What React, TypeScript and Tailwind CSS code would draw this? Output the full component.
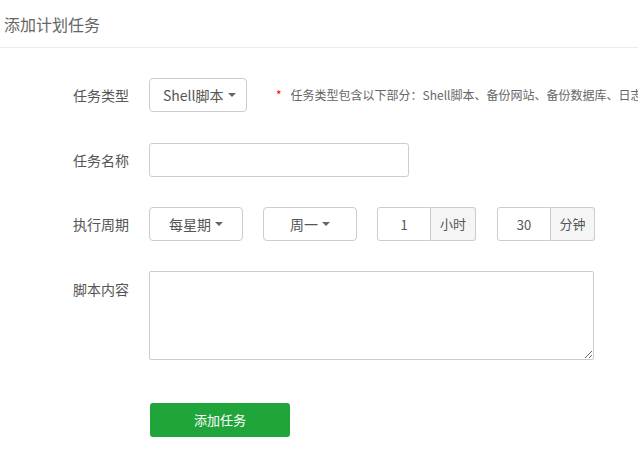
import React from 'react'

const font = { fontFamily: '"Noto Sans CJK SC", "Microsoft YaHei", sans-serif' }

function Caret() {
  return <span className="ml-[4px] inline-block h-0 w-0 border-x-[4px] border-t-[4px] border-x-transparent border-t-[#666] align-middle" />
}

function SelectButton({ label, className }: { label: string; className: string }) {
  return (
    <button
      type="button"
      className={`flex h-[34px] items-center justify-center rounded-[4px] border border-[#ccc] bg-white text-[14px] text-[#555] ${className}`}
    >
      {label}
      <Caret />
    </button>
  )
}

function InputGroup({ value, unit, className }: { value: string; unit: string; className: string }) {
  return (
    <div className={`flex h-[34px] ${className}`}>
      <input
        defaultValue={value}
        className="h-full w-[54px] rounded-l-[3px] border border-[#ccc] text-center text-[13px] text-[#555] outline-none"
      />
      <span className="flex h-full flex-1 items-center justify-center rounded-r-[3px] border border-l-0 border-[#ccc] bg-[#f5f5f5] text-[13px] text-[#555]">
        {unit}
      </span>
    </div>
  )
}

function Row({ label, top, className = '', children }: { label: string; top?: boolean; className?: string; children: React.ReactNode }) {
  return (
    <div className={`flex ${top ? 'items-start' : 'items-center'} ${className}`}>
      <label className={`w-[129px] shrink-0 text-right text-[14px] text-[#555] ${top ? 'pt-[8px]' : ''}`}>{label}</label>
      <div className="ml-[20px] flex items-center">{children}</div>
    </div>
  )
}

export default function App() {
  return (
    <div className="h-[455px] w-[638px] overflow-hidden bg-white" style={font}>
      <div className="flex h-[48px] items-center border-b border-[#ececec] pl-[4px] text-[16px] text-[#666]">
        添加计划任务
      </div>
      <div className="flex flex-col gap-[30px] pt-[30px]">
        <Row label="任务类型">
          <SelectButton label="Shell脚本" className="w-[98px] justify-start pl-[13px]" />
          <span className="ml-[29px] whitespace-nowrap text-[12px] text-[#666]">
            <span className="mr-[9px] text-[#f00]">*</span>
            任务类型包含以下部分：Shell脚本、备份网站、备份数据库、日志切割、释放内存、访问URL
          </span>
        </Row>
        <Row label="任务名称" className="mt-[1px]">
          <input className="h-[34px] w-[260px] rounded-[3px] border border-[#ccc] outline-none" />
        </Row>
        <Row label="执行周期">
          <SelectButton label="每星期" className="w-[94px]" />
          <SelectButton label="周一" className="ml-[20px] w-[94px]" />
          <InputGroup value="1" unit="小时" className="ml-[20px] w-[99px]" />
          <InputGroup value="30" unit="分钟" className="ml-[21px] w-[98px]" />
        </Row>
        <Row label="脚本内容" top>
          <textarea className="h-[89px] w-[445px] rounded-[2px] border border-[#ccc] outline-none" />
        </Row>
        <div className="mt-[13px] pl-[150px]">
          <button type="button" className="h-[34px] w-[140px] rounded-[3px] bg-[#20a53a] text-[13px] text-white">
            添加任务
          </button>
        </div>
      </div>
    </div>
  )
}
